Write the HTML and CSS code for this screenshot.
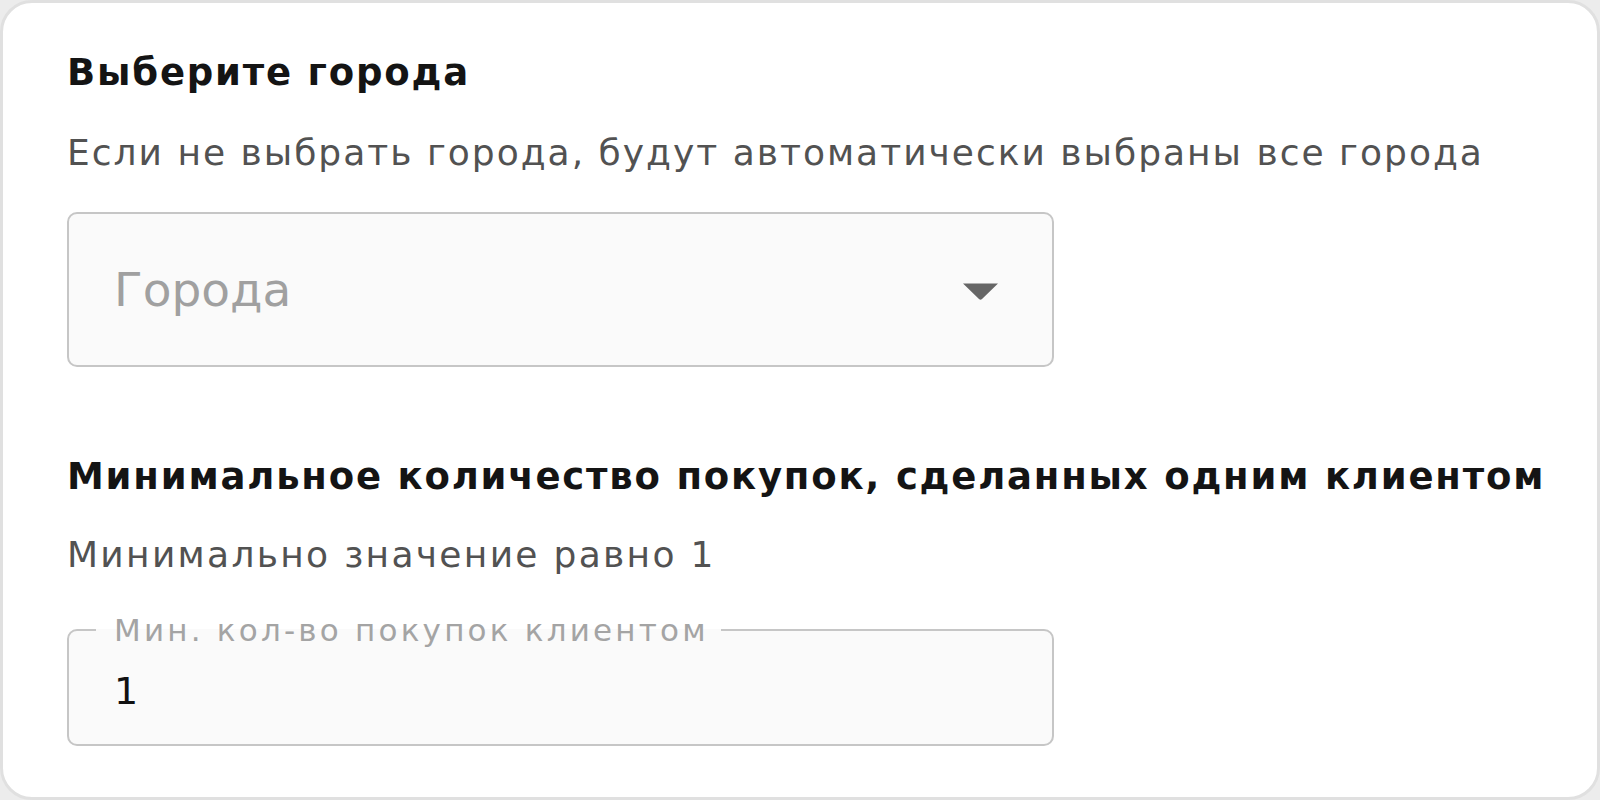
FILE: index.html
```html
<!DOCTYPE html>
<html lang="ru">
<head>
<meta charset="utf-8">
<title>Фильтры</title>
<link rel="stylesheet" href="styles.css">
</head>
<body>
<div class="card">
  <h2 class="title">Выберите города</h2>
  <p class="hint">Если не выбрать города, будут автоматически выбраны все города</p>
  <div class="select">
    <span class="placeholder">Города</span>
    <svg class="arrow" width="37" height="17" viewBox="0 0 37 17"><path d="M1 0.5 H36 L20 16 Q18.5 17.5 17 16 Z" fill="#666666"/></svg>
  </div>
  <h2 class="title title-2">Минимальное количество покупок, сделанных одним клиентом</h2>
  <p class="hint hint-2">Минимально значение равно 1</p>
  <fieldset class="field">
    <legend class="field-label">Мин. кол-во покупок клиентом</legend>
    <div class="field-value">1</div>
  </fieldset>
</div>
</body>
</html>
```

FILE: styles.css
```css
* { box-sizing: border-box; }
html, body { margin: 0; padding: 0; }
body {
  width: 1600px;
  height: 800px;
  background: #ececec;
  font-family: "DejaVu Sans", "Liberation Sans", sans-serif;
}
.card {
  width: 1600px;
  height: 800px;
  background: #ffffff;
  border: 3px solid #e0e0e0;
  border-radius: 32px;
  padding: 49px 64px 0 64px;
}
.title {
  margin: 0;
  font-size: 37px;
  line-height: 42px;
  font-weight: 700;
  color: #141414;
  letter-spacing: 1.8px;
  white-space: nowrap;
}
.title-2 { margin-top: 89px; }
.hint {
  margin: 38px 0 0 0;
  font-size: 36px;
  line-height: 42px;
  color: #525252;
  letter-spacing: 2px;
  white-space: nowrap;
}
.hint-2 { margin-top: 36px; letter-spacing: 2.3px; }
.select {
  margin-top: 38px;
  width: 987px;
  height: 155px;
  border: 2px solid #c6c6c6;
  border-radius: 10px;
  background: #fafafa;
  display: flex;
  align-items: center;
  justify-content: space-between;
  padding: 0 53px 0 45px;
}
.placeholder {
  font-size: 47px;
  color: #a0a0a0;
}
.arrow { display: block; margin-top: 4px; }
.field {
  margin: 36px 0 0 0;
  width: 987px;
  border: 2px solid #c6c6c6;
  border-radius: 10px;
  background: #fafafa;
  padding: 0 20px 31px 27px;
  min-width: 0;
}
.field-label {
  padding: 0 12px 0 18px;
  font-size: 31px;
  line-height: 36px;
  color: #a4a4a4;
  letter-spacing: 3.2px;
}
.field-value {
  margin: 21px 0 0 18px;
  font-size: 38px;
  line-height: 44px;
  color: #111111;
}
```
